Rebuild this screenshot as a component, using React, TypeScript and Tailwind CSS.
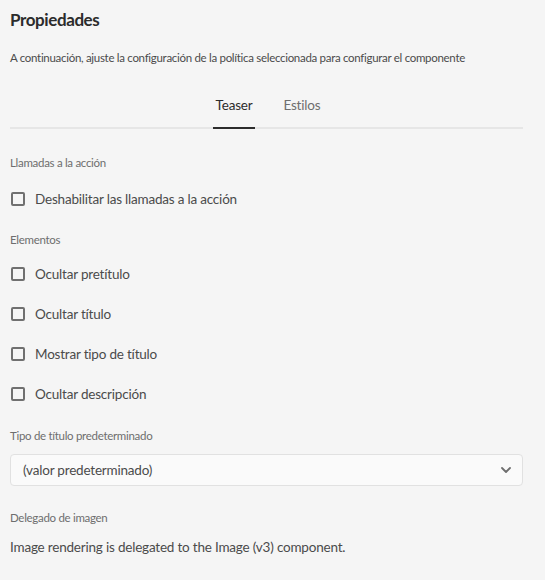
const checks = ["Ocultar pretítulo", "Ocultar título", "Mostrar tipo de título", "Ocultar descripción"];

function Checkbox({ label }: { label: string }) {
  return (
    <label className="flex h-[40px] items-center">
      <span className="ml-[1px] h-[14px] w-[14px] rounded-[2px] border-2 border-[#707070] bg-[#f5f5f5]" />
      <span className="ml-[10px] text-[13.5px] tracking-[-0.2px] text-[#4b4b4b]">{label}</span>
    </label>
  );
}

function FieldLabel({ children, className = "" }: { children: string; className?: string }) {
  return (
    <div className={`text-[11.5px] leading-[18px] tracking-[-0.3px] text-[#6e6e6e] ${className}`}>{children}</div>
  );
}

export default function App() {
  return (
    <div className="min-h-[580px] bg-[#f5f5f5] pl-[10px] pr-[22px] font-['Lato',sans-serif]">
      <h1 className="flex h-[40px] items-center text-[17px] font-bold tracking-[-0.4px] text-[#2c2c2c]">
        Propiedades
      </h1>
      <p className="mt-[9px] text-[11.5px] leading-[18px] tracking-[-0.3px] text-[#4b4b4b]">
        A continuación, ajuste la configuración de la política seleccionada para configurar el componente
      </p>

      <div className="mt-[16px] flex justify-center gap-[28px] border-b-2 border-[#e6e6e6]">
        <div className="-mb-[2px] flex h-[46px] items-center border-b-2 border-[#2c2c2c] px-[3px] text-[13.5px] tracking-[-0.2px] text-[#2c2c2c]">
          Teaser
        </div>
        <div className="-mb-[2px] flex h-[46px] items-center border-b-2 border-transparent text-[13.5px] tracking-[-0.2px] text-[#6e6e6e]">
          Estilos
        </div>
      </div>

      <FieldLabel className="mt-[25px]">Llamadas a la acción</FieldLabel>
      <div className="mt-[7px]">
        <Checkbox label="Deshabilitar las llamadas a la acción" />
      </div>

      <FieldLabel className="mt-[12px]">Elementos</FieldLabel>
      <div className="mt-[5px]">
        {checks.map((c) => (
          <Checkbox key={c} label={c} />
        ))}
      </div>

      <FieldLabel className="mt-[13px]">Tipo de título predeterminado</FieldLabel>
      <div className="mt-[9px] flex h-[32px] items-center justify-between rounded-[4px] border border-[#e1e1e1] bg-[#fafafa] pl-[12px] pr-[11px]">
        <span className="text-[13.5px] tracking-[-0.2px] text-[#4b4b4b]">(valor predeterminado)</span>
        <svg width="10" height="6" viewBox="0 0 10 6" fill="none">
          <path d="M1 1l4 4 4-4" stroke="#6e6e6e" strokeWidth="1.8" strokeLinecap="round" strokeLinejoin="round" />
        </svg>
      </div>

      <FieldLabel className="mt-[23px]">Delegado de imagen</FieldLabel>
      <p className="mt-[10px] text-[13.5px] leading-[20px] tracking-[-0.2px] text-[#4b4b4b]">
        Image rendering is delegated to the Image (v3) component.
      </p>
    </div>
  );
}
